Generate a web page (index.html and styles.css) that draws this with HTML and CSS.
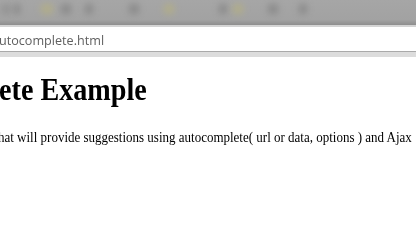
FILE: index.html
```html
<!DOCTYPE html>
<html lang="en">

<head>
    <meta charset="UTF-8">
    <title>Autocomplete Example</title>
    <link rel="stylesheet" href="styles.css">
</head>

<body>
    <div class="toolbar">
        <span class="blob b1"></span>
        <span class="blob b2"></span>
        <span class="blob b3 yellow"></span>
        <span class="blob b4"></span>
        <span class="blob b5"></span>
        <span class="blob b6"></span>
        <span class="blob b7 yellow"></span>
        <span class="blob b8"></span>
        <span class="blob b9 yellow"></span>
        <span class="blob b10"></span>
        <span class="blob b11"></span>
    </div>

    <div class="address-bar">
        <span class="url">utocomplete.html</span>
    </div>
    <div class="bar-shadow"></div>

    <div class="page">
        <h1>ete Example</h1>
        <p>hat will provide suggestions using autocomplete( url or data, options ) and Ajax</p>
    </div>
</body>

</html>
```

FILE: styles.css
```css
body {
    margin: 0;
    background-color: #ffffff;
    overflow: hidden;
}

.toolbar {
    position: relative;
    height: 25px;
    background: linear-gradient(to bottom, #a6a6a6 0%, #a2a2a2 80%, #8e8e8e 100%);
    border-bottom: 2px solid #d4d4d4;
    overflow: hidden;
}

/* blurred toolbar icons */
.blob {
    position: absolute;
    top: 3px;
    width: 12px;
    height: 12px;
    border-radius: 50%;
    background-color: #7c7c7c;
    filter: blur(3px);
    opacity: 0.55;
}

.blob.yellow {
    background-color: #b8b27a;
}

.b1 { left: 0; background-color: #8a8a8a; }
.b2 { left: 13px; width: 8px; }
.b3 { left: 40px; width: 14px; }
.b4 { left: 60px; }
.b5 { left: 84px; width: 10px; }
.b6 { left: 128px; }
.b7 { left: 163px; }
.b8 { left: 218px; width: 10px; }
.b9 { left: 232px; }
.b10 { left: 267px; }
.b11 { left: 298px; width: 10px; }

.address-bar {
    height: 24px;
    background-color: #ffffff;
    border-bottom: 1px solid #a9a9a9;
    display: flex;
    align-items: center;
}

.url {
    font-family: 'Open Sans', sans-serif;
    font-size: 13px;
    color: #606060;
    margin-left: -1px;
    padding-top: 1px;
    transform: scaleX(0.97);
    transform-origin: left center;
}

.bar-shadow {
    height: 5px;
    background-color: #dcdcdc;
}

/* the shot is squeezed sideways, so the page text is too */
.page {
    font-family: 'Liberation Serif', serif;
    color: #000000;
    white-space: nowrap;
}

.page h1 {
    font-size: 32px;
    font-weight: bold;
    margin: 14px 0 0 -1px;
    transform: scaleX(0.88);
    transform-origin: left center;
}

.page p {
    font-size: 15px;
    margin: 21px 0 0 -2px;
    transform: scaleX(0.866);
    transform-origin: left center;
}
```
